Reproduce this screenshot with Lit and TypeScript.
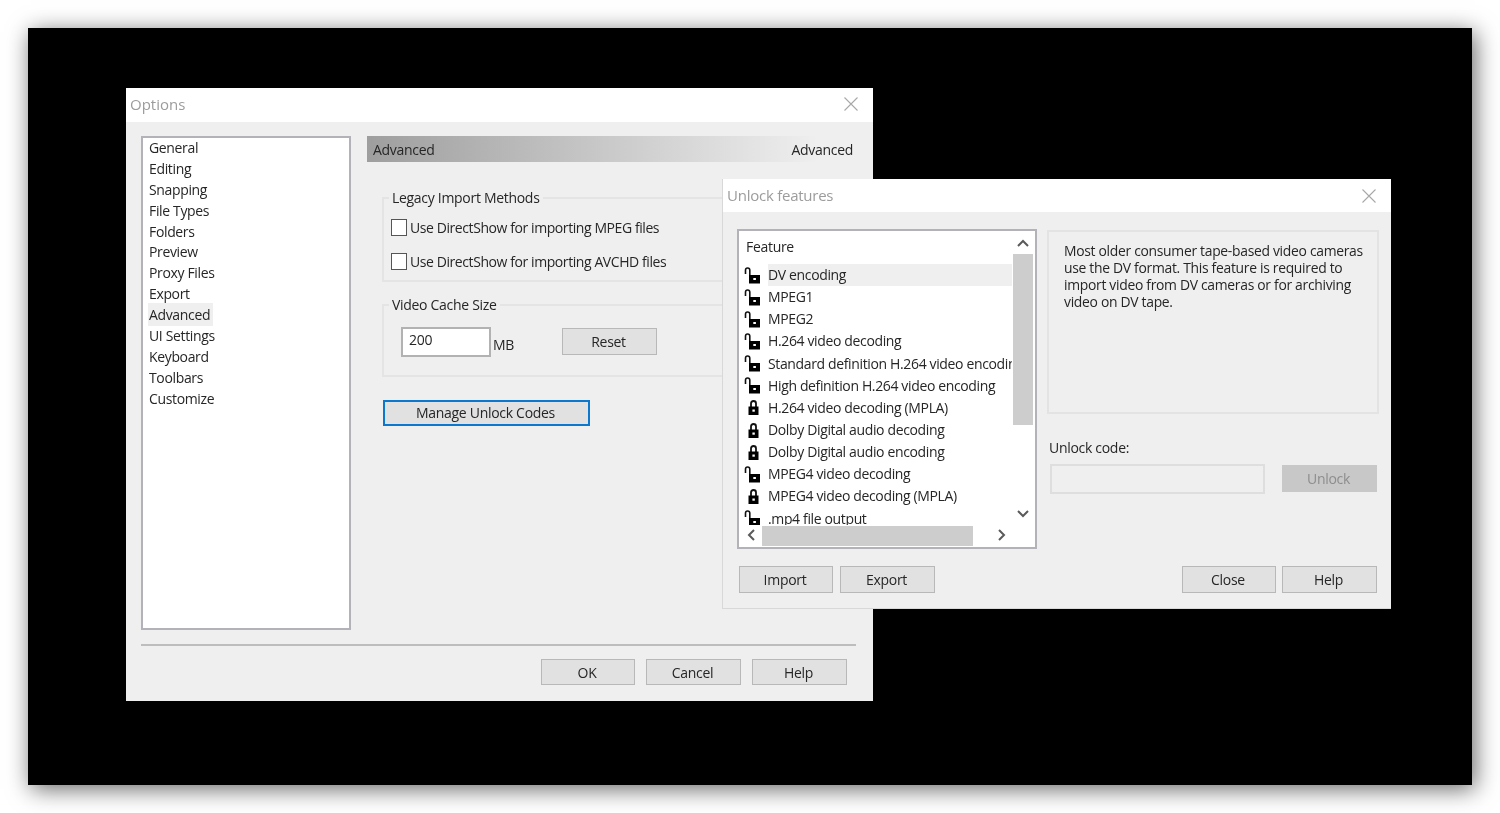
import { LitElement, html, css, svg } from "lit";
import { customElement } from "lit/decorators.js";

const openLock = svg`<svg class="ico" viewBox="0 0 16 17" width="16" height="17"><path d="M1.5 7V3.2C1.5 1.8 2.4 1 3.6 1S5.8 1.8 5.8 3.2V8" fill="none" stroke="#111" stroke-width="1.6"/><rect x="5" y="8" width="11" height="8.5" fill="#000"/><rect x="9.3" y="11" width="2.6" height="2" fill="#fff"/></svg>`;
const closedLock = svg`<svg class="ico" viewBox="0 0 16 17" width="16" height="17"><path d="M7 8V4.4C7 2.9 7.9 2 9.5 2S12 2.9 12 4.4V8" fill="none" stroke="#111" stroke-width="1.8"/><rect x="4.5" y="7.5" width="10" height="8.5" fill="#000"/><rect x="8.4" y="10.5" width="2.4" height="2.2" fill="#fff"/></svg>`;
const closeX = svg`<svg viewBox="0 0 14 14" width="14" height="14"><path d="M.5.5l13 13M13.5.5l-13 13" stroke="#a8a8a8" stroke-width="1.1" fill="none"/></svg>`;
const chev = (d: string) => svg`<svg viewBox="0 0 12 8" width="12" height="8"><path d="${d}" fill="none" stroke="#5a5a5a" stroke-width="2"/></svg>`;
const chevH = (d: string) => svg`<svg viewBox="0 0 8 12" width="8" height="12"><path d="${d}" fill="none" stroke="#5a5a5a" stroke-width="2"/></svg>`;

const NAV = ["General", "Editing", "Snapping", "File Types", "Folders", "Preview", "Proxy Files", "Export", "Advanced", "UI Settings", "Keyboard", "Toolbars", "Customize"];
const FEATURES: [string, boolean][] = [
  ["DV encoding", true], ["MPEG1", true], ["MPEG2", true], ["H.264 video decoding", true],
  ["Standard definition H.264 video encoding", true], ["High definition H.264 video encoding", true],
  ["H.264 video decoding (MPLA)", false], ["Dolby Digital audio decoding", false],
  ["Dolby Digital audio encoding", false], ["MPEG4 video decoding", true],
  ["MPEG4 video decoding (MPLA)", false], [".mp4 file output", true],
];

@customElement("app-root")
export class AppRoot extends LitElement {
  static styles = css`
    :host { display: block; width: 1500px; height: 813px; background: #fff; overflow: hidden;
      font: 14px/17px "Open Sans", "Noto Sans", sans-serif; color: #262626; letter-spacing: -0.3px; }
    .desktop { position: relative; margin: 28px 0 0 28px; width: 1444px; height: 757px; background: #000;
      box-shadow: 3px 4px 22px rgba(0,0,0,.6); }
    .win { position: absolute; background: #efefef; display: flex; flex-direction: column; box-sizing: border-box; filter: blur(.4px); }
    .options { left: 98px; top: 60px; width: 747px; height: 613px; }
    .unlock { left: 694px; top: 151px; width: 669px; height: 430px; border: 1px solid #d8d8d8; border-top: 0; border-right: 0; }
    .title { height: 34px; flex: none; background: #fff; display: flex; align-items: center; justify-content: space-between;
      padding: 0 15px 2px 4px; box-sizing: border-box; color: #9c9c9c; font-size: 15px; letter-spacing: 0; }
    .unlock .title { height: 33px; padding: 0 15px 0 4px; letter-spacing: -0.25px; }
    .title svg { display: block; }

    .o-body { display: grid; grid-template-columns: 210px 490px; column-gap: 16px; padding: 14px 16px 0 15px; }
    .nav { height: 494px; box-sizing: border-box; background: #fff; border: 2px solid #b2b2b8; padding: 0 0 0 6px; letter-spacing: -0.35px; }
    .nav div { height: 20.9px; line-height: 20.9px; }
    .nav .sel span { background: #efefef; padding: 2px 3px 2px 1px; margin-left: -1px; }
    .head { height: 26px; display: flex; align-items: center; justify-content: space-between; padding: 0 4px 0 6px;
      background: linear-gradient(90deg, #9e9e9e, #efefef 92%); }
    .group { position: relative; margin-left: 15px; border: 2px solid #e4e4e4; border-right: 0; box-sizing: border-box; }
    .group .legend { position: absolute; left: 5px; top: -10px; background: #efefef; padding: 0 3px; }
    .g1 { margin-top: 35px; height: 85px; padding-top: 20px; }
    .g2 { margin-top: 22px; height: 73px; }
    .chk { display: flex; align-items: center; gap: 3px; height: 17px; margin: 0 0 17px 7px; letter-spacing: -0.42px; }
    .chk i { width: 14px; height: 15px; border: 1.5px solid #555; background: #fff; display: block; flex: none; }
    .cache { display: flex; padding: 21px 0 0 17px; }
    .cache .in { height: 26px; background: #fff; border: 2px solid #b2b2b2; padding: 0 0 0 6px; line-height: 22px; width: 80px; margin-left: 0; }
    .cache .mb { margin: 9px 0 0 2px; width: 69px; }
    .cache .btn { margin-top: 1px; }
    .btn { width: 95px; height: 27px; box-sizing: border-box; background: #e1e1e1; border: 1.5px solid #b8b8b8; display: flex; align-items: center; justify-content: center; flex: none; padding: 0 2px 1px 0; }
    .manage { margin: 23px 0 0 16px; width: 207px; height: 26px; border: 2px solid #0b78d0; background: #e1e1e1; }
    .sep { margin: 14px 17px 0 15px; height: 2px; background: #bdbdbd; }
    .o-foot { display: flex; justify-content: flex-end; gap: 11px; padding: 13px 26px 0 0; }
    .o-foot .btn { height: 26px; padding-bottom: 0; }
    .o-foot .btn:first-child { width: 94px; }

    .u-body { display: grid; grid-template-columns: 300px 332px; column-gap: 10px; padding: 17px 0 0 14px; }
    .list { position: relative; height: 320px; box-sizing: border-box; border: 2px solid #b2b2b8; background: #fff; overflow: hidden; }
    .viewport { width: 273px; height: 294px; overflow: hidden; }
    .fhead { padding: 7px 0 0 7px; height: 33px; box-sizing: border-box; }
    .row { display: flex; align-items: center; height: 22.15px; white-space: nowrap; padding-left: 5px; letter-spacing: -0.36px; }
    .row .ico { flex: none; margin-right: 8px; }
    .row span { flex: 1; line-height: 22px; overflow: hidden; }
    .row.sel span { background: #efefef; }
    .vbar { position: absolute; right: 2px; top: 0; width: 20px; height: 294px; display: flex; flex-direction: column; align-items: center; background: #fff; }
    .vbar .thumb { position: absolute; top: 23px; left: 0; width: 20px; height: 171px; background: #cdcdcd; }
    .vbar .up { position: relative; margin-top: 8px; } .vbar .down { position: absolute; bottom: 7px; }
    .vbar svg, .hbar svg { display: block; }
    .hbar { position: absolute; left: 1px; bottom: 1px; width: 274px; height: 20px; display: flex; align-items: center; background: #fff; padding-bottom: 2px; box-sizing: border-box; }
    .hbar .l { position: relative; margin-left: 7px; } .hbar .thumb { position: absolute; left: 22px; top: 0; width: 211px; height: 20px; background: #cdcdcd; }
    .hbar .r { position: absolute; right: 8px; }
    .info { height: 184px; box-sizing: border-box; border: 2px solid #e3e3e3; padding: 10px 6px 0 15px; line-height: 17px; font-size: 13.9px; margin-top: 1px; }
    .ulabel { margin: 25px 0 0 2px; }
    .ucode { display: flex; gap: 17px; margin: 8px 0 0 3px; align-items: flex-start; }
    .ucode .in { width: 215px; height: 30px; box-sizing: border-box; border: 2px solid #dedede; background: #efefef; }
    .btn.dis { background: #c8c8c8; border-color: #c8c8c8; color: #8d8d8d; margin-top: 1px; }
    .u-foot { display: flex; padding: 17px 14px 0 16px; gap: 7px; }
    .u-foot .btn:first-child { width: 94px; }
    .u-foot .gap { flex: 1; }
    .u-foot .close { width: 94px; margin-right: -1px; }
  `;

  render() {
    return html`<div class="desktop">
      <div class="win options">
        <div class="title"><span>Options</span>${closeX}</div>
        <div class="o-body">
          <div class="nav">${NAV.map((n) => html`<div class=${n === "Advanced" ? "sel" : ""}><span>${n}</span></div>`)}</div>
          <div>
            <div class="head"><span>Advanced</span><span>Advanced</span></div>
            <div class="group g1"><span class="legend">Legacy Import Methods</span>
              <div class="chk"><i></i>Use DirectShow for importing MPEG files</div>
              <div class="chk"><i></i>Use DirectShow for importing AVCHD files</div>
            </div>
            <div class="group g2"><span class="legend">Video Cache Size</span>
              <div class="cache"><div class="in">200</div><div class="mb">MB</div><div class="btn">Reset</div></div>
            </div>
            <div class="btn manage">Manage Unlock Codes</div>
          </div>
        </div>
        <div class="sep"></div>
        <div class="o-foot"><div class="btn">OK</div><div class="btn">Cancel</div><div class="btn">Help</div></div>
      </div>

      <div class="win unlock">
        <div class="title"><span>Unlock features</span>${closeX}</div>
        <div class="u-body">
          <div class="list">
            <div class="viewport">
              <div class="fhead">Feature</div>
              ${FEATURES.map(([n, open], i) => html`<div class="row ${i === 0 ? "sel" : ""}">${open ? openLock : closedLock}<span>${n}</span></div>`)}
            </div>
            <div class="vbar"><div class="thumb"></div><div class="up">${chev("M1 7l5-5 5 5")}</div><div class="down">${chev("M1 1l5 5 5-5")}</div></div>
            <div class="hbar"><div class="thumb"></div><div class="l">${chevH("M7 1L2 6l5 5")}</div><div class="r">${chevH("M1 1l5 5-5 5")}</div></div>
          </div>
          <div>
            <div class="info">Most older consumer tape-based video cameras use the DV format. This feature is required to import video from DV cameras or for archiving video on DV tape.</div>
            <div class="ulabel">Unlock code:</div>
            <div class="ucode"><div class="in"></div><div class="btn dis">Unlock</div></div>
          </div>
        </div>
        <div class="u-foot"><div class="btn">Import</div><div class="btn">Export</div><div class="gap"></div><div class="btn close">Close</div><div class="btn">Help</div></div>
      </div>
    </div>`;
  }
}
